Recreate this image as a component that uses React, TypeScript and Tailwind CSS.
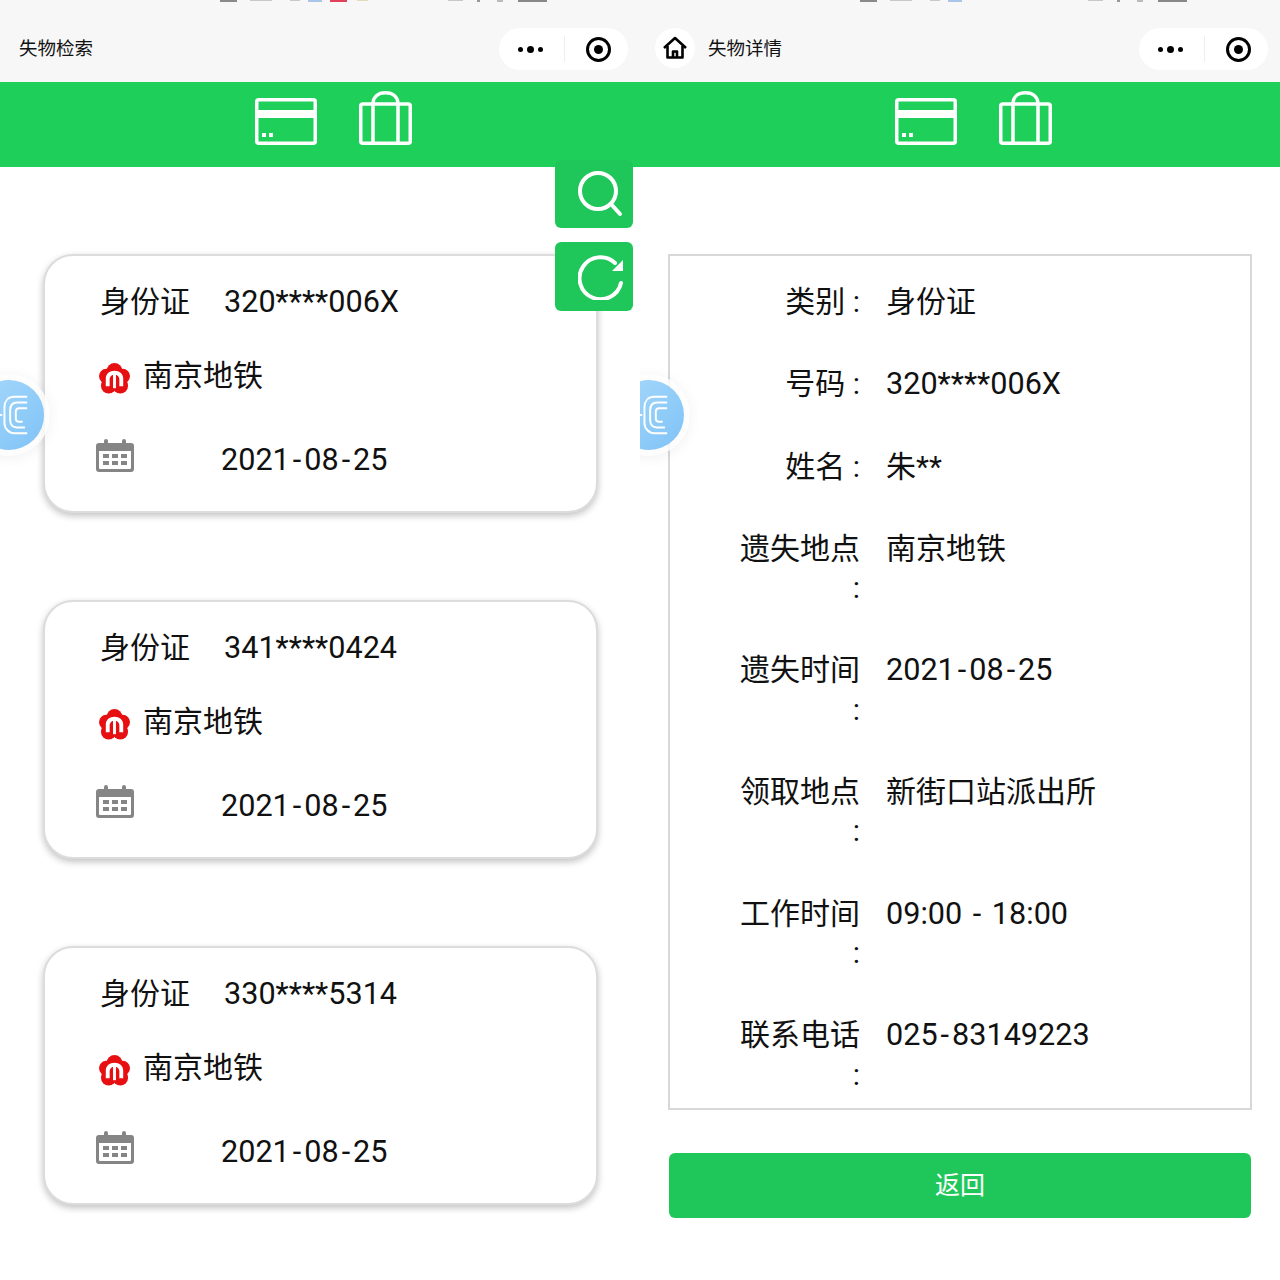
const FONT = "font-['Roboto','Noto_Sans_CJK_SC',sans-serif]"

function TopBits({ colored }: { colored: boolean }) {
	return (
		<div className="flex h-[16px] bg-[#f7f7f7] pl-[220px]">
			<div className="flex h-[2px] w-[228px] items-start">
				<div className="h-[2px] w-[17px] bg-[#8a8a8a]" />
				<div className="ml-[13px] h-px w-[22px] bg-[#c8c8c8]" />
				<div className="ml-[18px] h-px w-[10px] bg-[#c8c8c8]" />
				<div className="ml-[8px] h-[2px] w-[14px] bg-[#a9c6ea]" />
				{colored && <div className="ml-[8px] h-[2px] w-[17px] bg-[#e0405c]" />}
				{colored && <div className="ml-[10px] h-px w-[11px] bg-[#e2dcb8]" />}
			</div>
			<div className="flex h-[2px] items-start">
				<div className="h-px w-[15px] bg-[#c8c8c8]" />
				<div className="ml-[14px] h-[2px] w-[3px] bg-[#999]" />
				<div className="ml-[17px] h-[2px] w-[6px] bg-[#bbb]" />
				<div className="ml-[15px] h-[2px] w-[29px] bg-[#888]" />
			</div>
		</div>
	)
}

function Capsule() {
	return (
		<div className="flex h-[42px] w-[129px] items-center rounded-full bg-white">
			<div className="flex w-[65px] items-center justify-center gap-[4px] pr-[3px]">
				<span className="size-[5px] rounded-full bg-black" />
				<span className="size-[7px] rounded-full bg-black" />
				<span className="size-[5px] rounded-full bg-black" />
			</div>
			<div className="h-[26px] w-px bg-[#eee]" />
			<div className="flex flex-1 items-center justify-center pl-[3px]">
				<div className="flex size-[25px] items-center justify-center rounded-full border-[3px] border-black">
					<span className="size-[9px] rounded-full bg-black" />
				</div>
			</div>
		</div>
	)
}

function CardIcon() {
	return (
		<svg width="62" height="47" viewBox="0 0 62 47" fill="none" stroke="#fff" strokeWidth="3.5">
			<rect x="1.750" y="1.750" width="58.500" height="43.500" rx="2" />
			<rect x="1.500" y="12" width="59" height="8" fill="#fff" stroke="none" />
			<rect x="7" y="35" width="4" height="4" fill="#fff" stroke="none" />
			<rect x="14" y="35" width="4" height="4" fill="#fff" stroke="none" />
		</svg>
	)
}

function BagIcon() {
	return (
		<svg width="53" height="54" viewBox="0 0 53 54" fill="none" stroke="#fff" strokeWidth="3.5">
			<rect x="1.750" y="13" width="49.500" height="39.250" rx="2" />
			<path d="M14 13V52M39 13V52" />
			<path d="M14 13C14 6 19 1.750 26.500 1.750S39 6 39 13" />
		</svg>
	)
}

function Header() {
	return (
		<div className="flex h-[85px] items-end justify-center gap-[42px] bg-[#1ecf5a] pb-[22px] pl-[27px]">
			<CardIcon />
			<BagIcon />
		</div>
	)
}

function FloatBall() {
	return (
		<div className="absolute top-[380px] left-[-26px] flex size-[70px] items-center justify-center rounded-full bg-gradient-to-br from-[#a6d8fb] to-[#7fc3f6] shadow-[0_0_0_6px_rgba(255,255,255,0.8),0_2px_14px_6px_rgba(0,0,0,0.06)]">
			<svg width="50" height="50" viewBox="0 0 44 44" fill="none" stroke="#fff" strokeWidth="1.700">
				<path d="M38 6H27C21 6 18 10 18 15V29C18 34 22 38 27 38H38" />
				<path d="M38 11H29C25 11 23 14 23 18V26C23 30 25 33 29 33H36" />
				<path d="M38 16H31C29 16 28 17 28 19V25C28 27 29 28 31 28H34" />
				<path d="M4 22H16" />
			</svg>
		</div>
	)
}

function SubwayLogo() {
	return (
		<svg width="31" height="31" viewBox="0 0 32 32">
			<g fill="#e60f12">
				<circle cx="16" cy="8" r="8" />
				<circle cx="7.500" cy="13.500" r="7.500" />
				<circle cx="24.500" cy="13.500" r="7.500" />
				<circle cx="10" cy="23.500" r="8" />
				<circle cx="22" cy="23.500" r="8" />
				<circle cx="16" cy="16" r="9" />
			</g>
			<path d="M7 24V16C7 11 11 8 16 8S25 11 25 16V24H21V16.500C21 14 19 12 16 12S11 14 11 16.500V24Z" fill="#fff" />
			<rect x="14.500" y="11" width="3" height="15" fill="#fff" />
		</svg>
	)
}

function CalendarIcon() {
	return (
		<svg width="38" height="33" viewBox="0 0 38 33" fill="#858585">
			<path d="M3 4H8V2a2 2 0 0 1 4 0V4H26V2a2 2 0 0 1 4 0V4H35a3 3 0 0 1 3 3V30a3 3 0 0 1-3 3H3a3 3 0 0 1-3-3V7a3 3 0 0 1 3-3ZM3 12V29a1 1 0 0 0 1 1H34a1 1 0 0 0 1-1V12Z" fillRule="evenodd" />
			<rect x="7" y="15" width="6" height="4" />
			<rect x="16" y="15" width="6" height="4" />
			<rect x="25" y="15" width="6" height="4" />
			<rect x="7" y="22" width="6" height="4" />
			<rect x="16" y="22" width="6" height="4" />
			<rect x="25" y="22" width="6" height="4" />
		</svg>
	)
}

// the hyphen in the reference is wider than Roboto's
function Num({ text }: { text: string }) {
	const parts = text.split('-')
	return (
		<span className="text-[30.600px]">
			{parts.map((p, i) => (
				<span key={i}>
					{i > 0 && <span className="mx-[3px]">-</span>}
					{p}
				</span>
			))}
		</span>
	)
}

function LostCard({ num }: { num: string }) {
	return (
		<div className="h-[259px] rounded-[30px] border-2 border-[#dcdcde] bg-white pt-[25px] pl-[55px] text-[30px] leading-[41px] text-[#111] shadow-[0_3px_7px_rgba(0,0,0,0.24)]">
			<div className="flex">
				<span className="w-[124px]">身份证</span>
				<Num text={num} />
			</div>
			<div className="mt-[33px] flex items-center">
				<div className="mt-[5px] ml-[-1px] flex">
					<SubwayLogo />
				</div>
				<span className="ml-[13px]">南京地铁</span>
			</div>
			<div className="mt-[43px] flex items-start">
				<div className="ml-[-4px] w-[125px]">
					<CalendarIcon />
				</div>
				<Num text="2021-08-25" />
			</div>
		</div>
	)
}

function DetailRow({ label, value, numeric }: { label: string; value: string; numeric?: boolean }) {
	return (
		<div className="flex">
			<div className="w-[120px] text-right">{label} :</div>
			<div className="ml-[26px]">{numeric ? <Num text={value} /> : value}</div>
		</div>
	)
}

function ListPanel() {
	return (
		<div className="relative h-[1280px] overflow-hidden bg-white">
			<TopBits colored />
			<div className="flex h-[66px] items-center justify-between bg-[#f7f7f7] pr-[12px] pl-[19px]">
				<span className="mt-[2px] text-[18.500px] text-[#111]">失物检索</span>
				<Capsule />
			</div>
			<Header />
			<div className="flex flex-col gap-[87px] pt-[87px] pr-[42px] pl-[43px]">
				<LostCard num="320****006X" />
				<LostCard num="341****0424" />
				<LostCard num="330****5314" />
			</div>
			<div className="absolute top-[160px] right-[7px] flex flex-col gap-[14px]">
				<div className="flex h-[68px] w-[78px] items-center justify-end rounded-[6px] bg-[#1fc75b] pr-[10px]">
					<svg width="46" height="46" viewBox="0 0 46 46" fill="none" stroke="#fff" strokeWidth="4" strokeLinecap="round">
						<circle cx="21" cy="20" r="18" />
						<path d="M34 33L43 43" />
					</svg>
				</div>
				<div className="flex h-[69px] w-[78px] items-center justify-end rounded-[6px] bg-[#1fc75b] pr-[9px]">
					<svg width="46" height="46" viewBox="0 0 46 46" fill="none" stroke="#fff" strokeWidth="4" strokeLinecap="round">
						<path d="M43 29A21 21 0 1 1 37 9" />
						<path d="M45 6V17H34Z" fill="#fff" stroke="none" />
					</svg>
				</div>
			</div>
			<FloatBall />
		</div>
	)
}

function DetailPanel() {
	return (
		<div className="relative h-[1280px] overflow-hidden bg-white">
			<TopBits colored={false} />
			<div className="flex h-[66px] items-center justify-between bg-[#f7f7f7] pr-[12px] pl-[15px]">
				<div className="flex items-center gap-[13px]">
					<div className="mb-[2px] flex size-[40px] items-center justify-center rounded-full bg-white">
						<svg width="24" height="24" viewBox="0 0 24 24" fill="none" stroke="#000" strokeWidth="2.600" strokeLinejoin="round">
							<path d="M1 12L12 2L23 12" />
							<path d="M4.500 10V21.500H19.500V10" />
							<path d="M10 21.500V15.500H14V21.500" />
						</svg>
					</div>
					<span className="mt-[2px] text-[18.500px] text-[#111]">失物详情</span>
				</div>
				<Capsule />
			</div>
			<Header />
			<div className="pt-[87px] pr-[28px] pl-[28px]">
				<div className="flex h-[856px] flex-col gap-[43px] border-2 border-[#d8d8d8] pt-[26px] pl-[70px] text-[30px] leading-[39.300px] text-[#111]">
					<DetailRow label="类别" value="身份证" />
					<DetailRow label="号码" value="320****006X" numeric />
					<DetailRow label="姓名" value="朱**" />
					<DetailRow label="遗失地点" value="南京地铁" />
					<DetailRow label="遗失时间" value="2021-08-25" numeric />
					<DetailRow label="领取地点" value="新街口站派出所" />
					<DetailRow label="工作时间" value="09:00 - 18:00" numeric />
					<DetailRow label="联系电话" value="025-83149223" numeric />
				</div>
				<div className="mx-px mt-[43px] flex h-[65px] items-center justify-center rounded-[6px] bg-[#1fc75b] text-[25px] text-white">
					返回
				</div>
			</div>
			<FloatBall />
		</div>
	)
}

export default function App() {
	return (
		<div className={`grid h-[1280px] w-[1280px] grid-cols-2 overflow-hidden ${FONT}`}>
			<ListPanel />
			<DetailPanel />
		</div>
	)
}
